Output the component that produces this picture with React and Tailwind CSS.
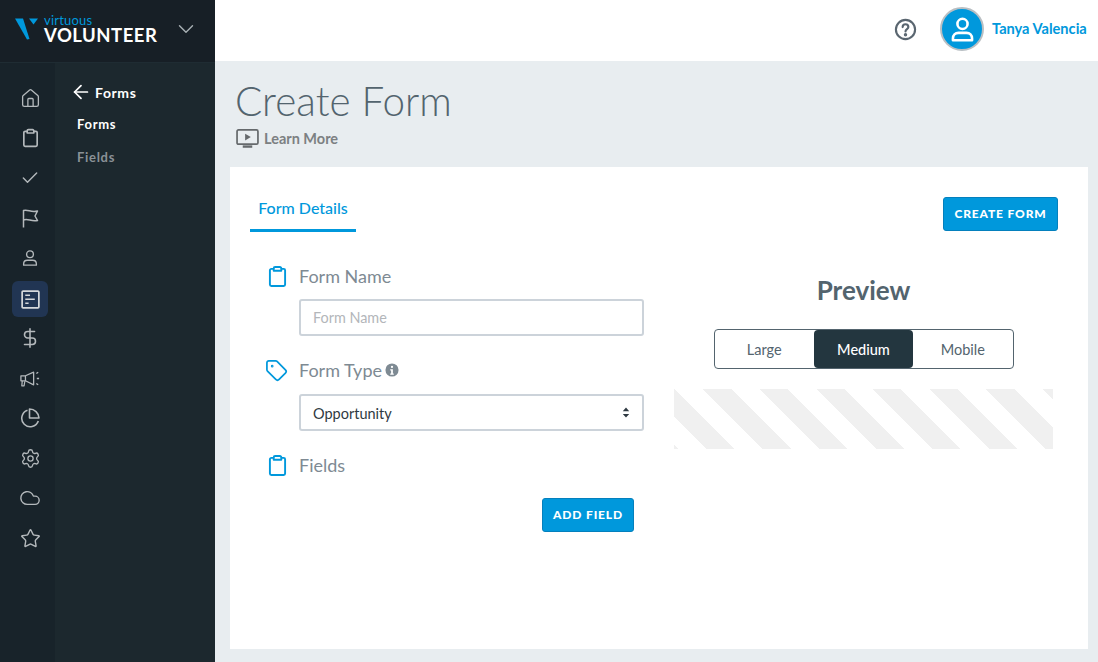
import React from "react";
import { Check, ChevronDown, Cloud, DollarSign, Settings, Star, House, ArrowLeft, Tag } from "lucide-react";

const Clip = ({ className }) => (
  <svg viewBox="0 0 20 24" fill="none" stroke="currentColor" strokeWidth="2" strokeLinejoin="round" className={className}>
    <path d="M6 4H3.5A1.5 1.5 0 0 0 2 5.5v15A1.5 1.5 0 0 0 3.5 22h13a1.5 1.5 0 0 0 1.500-1.500v-15A1.500 1.500 0 0 0 16.500 4H14" />
    <path d="M6 6V3.500A1.500 1.500 0 0 1 7.500 2h5A1.500 1.500 0 0 1 14 3.500V6Z" />
  </svg>
);
const Person = ({ className, sw = 2 }) => (
  <svg viewBox="0 0 24 24" fill="none" stroke="currentColor" strokeWidth={sw} className={className}>
    <circle cx="12" cy="7" r="4.500" />
    <path d="M3.500 21.500v-1.500c0-3 2-5 5-5h7c3 0 5 2 5 5v1.500Z" strokeLinejoin="round" />
  </svg>
);
const FormIcon = ({ className }) => (
  <svg viewBox="0 0 20 20" fill="none" stroke="currentColor" className={className}>
    <rect x="1.200" y="1.200" width="17.600" height="17.600" rx="1" strokeWidth="1.800" />
    <path d="M4.500 5.500h5M4.500 9.800h10M4.500 14h3.500" strokeWidth="1.700" />
  </svg>
);
const FlagIcon = ({ className }) => (
  <svg viewBox="0 0 20 20" fill="none" stroke="currentColor" strokeWidth="1.500" strokeLinejoin="round" className={className}>
    <path d="M3.500 19.500V2.500C8 1 11 5 17.500 3L15 8l2.500 4.500C11 14 8 10 3.500 12" />
  </svg>
);
const Mega = ({ className }) => (
  <svg viewBox="0 0 22 20" fill="none" stroke="currentColor" strokeWidth="1.400" strokeLinejoin="round" className={className}>
    <path d="M1 7h5v5.500H1Z" />
    <path d="M6 7l9-4v14l-9-4.500" />
    <path d="M2.500 12.500 2 18h2.500l.8-5" />
    <path d="M18 4.500 20 3M18.500 10h2.500M18 15.500l2 1.500" />
  </svg>
);
const Pie = ({ className }) => (
  <svg viewBox="0 0 20 20" fill="none" stroke="currentColor" strokeWidth="1.600" strokeLinejoin="round" className={className}>
    <path d="M7.500 2.200A8.500 8.500 0 1 0 18.300 13" />
    <path d="M9.500 1V10h9.500A9.500 9.500 0 0 0 9.500 1Z" />
  </svg>
);

const railIcons = [
  <House className="h-[21px] w-[21px]" strokeWidth={1.500} />,
  <Clip className="h-[20px] w-[17px]" />,
  <Check className="h-[20px] w-[20px]" strokeWidth={1.700} />,
  <FlagIcon className="h-[20px] w-[20px]" />,
  <Person className="h-[18px] w-[18px]" sw={1.800} />,
  <FormIcon className="h-[19px] w-[19px]" />,
  <DollarSign className="h-[22px] w-[22px]" strokeWidth={1.700} />,
  <Mega className="h-[19px] w-[20px]" />,
  <Pie className="h-[20px] w-[20px]" />,
  <Settings className="h-[21px] w-[21px]" strokeWidth={1.500} />,
  <Cloud className="h-[22px] w-[22px]" strokeWidth={1.500} />,
  <Star className="h-[21px] w-[21px]" strokeWidth={1.600} />,
];

const Btn = ({ children, className = "" }) => (
  <button className={"flex h-[34px] items-center justify-center rounded-[3px] border border-[#0480bd] bg-[#0098dc] text-[12px] font-black tracking-[0.85px] text-white " + className}>
    {children}
  </button>
);

const Label = ({ icon, children }) => (
  <div className="flex items-center">
    <div className="flex w-[49px] justify-center pl-[5px] text-[#0098dc]">{icon}</div>
    <span className="text-[18px] leading-[24px] text-[#7e8a93]">{children}</span>
  </div>
);

export default function App() {
  return (
    <div className="flex h-[662px] w-[1098px] overflow-hidden bg-[#e8edf0] font-['Lato',sans-serif]">
      <aside className="flex w-[215px] flex-col bg-[#1c282e]">
        <div className="flex h-[63px] items-center border-b border-[#1f2c33] bg-[#171f26] pb-[5px] pl-[15px] pr-[16px]">
          <svg viewBox="0 0 24 22" className="h-[24px] w-[24px]">
            <path d="M0 0.500h8L14.500 21 12 21.500Z" fill="#0098dc" />
            <path d="M14 0.500h9l-4.500 6Z" fill="#0098dc" />
          </svg>
          <div className="ml-[5px] flex flex-col">
            <span className="text-[13px] leading-[12px] tracking-[0.2px] text-[#0098dc]">virtuous</span>
            <span className="text-[18.500px] font-bold leading-[18px] tracking-[0.5px] text-white">VOLUNTEER</span>
          </div>
          <ChevronDown className="ml-auto h-[26px] w-[26px] text-[#a8b0b4]" strokeWidth={1.300} />
        </div>
        <div className="flex flex-1">
          <nav className="flex w-[55px] flex-col items-center bg-[#18232a] pt-[15px]">
            {railIcons.map((icon, i) => (
              <div key={i} className="flex h-10 w-full items-center justify-center pl-[5px] text-[#b4b9bc]">
                <div className={"flex h-9 w-9 items-center justify-center rounded-md " + (i === 5 ? "translate-y-[1px] bg-[#213553] text-[#d5d8db]" : "")}>{icon}</div>
              </div>
            ))}
          </nav>
          <div className="flex flex-1 flex-col pl-[20px] pt-[17px]">
            <div className="flex h-6 items-center text-[14px] font-bold tracking-[0.6px] text-white">
              <ArrowLeft className="-ml-[5px] mr-[3px] h-[22px] w-[22px]" strokeWidth={1.900} />
              Forms
            </div>
            <div className="mt-[8px] pl-[2px] text-[13px] font-bold leading-[24px] tracking-[0.7px] text-white">Forms</div>
            <div className="mt-[9px] pl-[2px] text-[13px] font-bold leading-[24px] tracking-[0.7px] text-[#8a9196]">Fields</div>
          </div>
        </div>
      </aside>

      <main className="flex flex-1 flex-col">
        <header className="flex h-[61px] items-center bg-white pb-[3px] pl-[679px]">
          <svg viewBox="0 0 24 24" fill="none" stroke="#5a6670" strokeWidth="2.200" className="h-[23px] w-[23px]">
            <circle cx="12" cy="12" r="10" />
            <path d="M9 9.500a3 3 0 0 1 6 0c0 2-3 2.300-3 4.500" strokeLinecap="round" />
            <circle cx="12" cy="17.500" r="0.700" fill="#5a6670" />
          </svg>
          <div className="ml-[23px] flex h-[44px] w-[44px] items-center justify-center rounded-full border-2 border-[#b9bfc3] bg-[#0098dc] text-white">
            <Person className="h-[27px] w-[27px]" sw={2.300} />
          </div>
          <span className="ml-[8px] text-[14.600px] font-bold text-[#0098dc]">Tanya Valencia</span>
        </header>

        <div className="flex h-[106px] flex-col pl-[20px] pt-[15px]">
          <h1 className="text-[40.400px] font-light leading-[50px] text-[#53646e]">Create Form</h1>
          <div className="mt-[2px] flex items-center pl-[1px] text-[14.500px] font-bold text-[#7c8082]">
            <svg viewBox="0 0 24 20" fill="none" className="mr-[5px] h-[19px] w-[23px]">
              <rect x="1" y="1" width="22" height="15" rx="1.500" stroke="#65696c" strokeWidth="1.800" />
              <path d="M9.500 5v7l6-3.500Z" fill="#65696c" />
              <path d="M7 18.500h10" stroke="#65696c" strokeWidth="2.500" />
            </svg>
            Learn More
          </div>
        </div>

        <section className="ml-[15px] mr-[10px] flex h-[482px] flex-col bg-white">
          <div className="flex items-start justify-between pl-[20px] pr-[30px] pt-[23px]">
            <div className="flex h-[42px] w-[106px] items-start justify-center border-b-[3px] border-[#0098dc] text-[16px] font-medium leading-[36px] text-[#0098dc]">
              Form Details
            </div>
            <Btn className="mt-[7px] w-[115px]">CREATE FORM</Btn>
          </div>

          <div className="flex">
            <div className="flex w-[444px] flex-col pl-[20px] pt-[32px]">
              <Label icon={<Clip className="h-[23px] w-[19px]" />}>Form Name</Label>
              <div className="ml-[49px] mt-[11px] flex h-[37px] w-[345px] items-center rounded-[3px] border-2 border-[#ccd3da] pl-[12px] text-[14.400px] text-[#b3b6ba]">
                Form Name
              </div>
              <div className="mt-[22px]">
                <Label icon={<Tag className="-ml-[2px] h-[23px] w-[23px]" strokeWidth={1.800} />}>
                  <span className="flex items-center">
                    Form Type
                    <svg viewBox="0 0 16 16" className="ml-[3px] h-[14px] w-[14px]">
                      <circle cx="8" cy="8" r="7.500" fill="#7e8a93" />
                      <circle cx="8" cy="4.500" r="1.300" fill="#fff" />
                      <path d="M6 7h3v5h1v1.500H6V12h1V8.500H6Z" fill="#fff" />
                    </svg>
                  </span>
                </Label>
              </div>
              <div className="ml-[49px] mt-[12px] flex h-[37px] w-[345px] items-center justify-between rounded-[3px] border-2 border-[#ccd3da] px-[12px] text-[14.500px] text-[#2f3a42]">
                <span className="pt-[2px]">Opportunity</span>
                <svg viewBox="0 0 8 12" className="h-[11px] w-[8px]" fill="#2f3a42">
                  <path d="M4 0.500 7.500 4.500h-7ZM4 11.500.5 7.500h7Z" />
                </svg>
              </div>
              <div className="mt-[22px]">
                <Label icon={<Clip className="h-[23px] w-[19px]" />}>Fields</Label>
              </div>
              <Btn className="ml-[292px] mt-[21px] w-[92px]">ADD FIELD</Btn>
            </div>

            <div className="flex flex-1 flex-col pr-[35px] pt-[42px]">
              <h2 className="text-center text-[26px] font-bold leading-[32px] text-[#53646e]">Preview</h2>
              <div className="mx-auto mt-[23px] flex h-10 w-[300px] rounded-[4px] border border-[#53646e] text-[14.500px] text-[#53646e]">
                <div className="flex flex-1 items-center justify-center pt-[2px]">Large</div>
                <div className="flex flex-1 items-center justify-center rounded-[4px] bg-[#23363f] pt-[2px] font-medium text-white">Medium</div>
                <div className="flex flex-1 items-center justify-center pt-[2px]">Mobile</div>
              </div>
              <div className="mt-5 h-[60px] w-[379px] bg-[repeating-linear-gradient(45deg,#f0f0f0_0,#f0f0f0_2.900px,#ffffff_2.900px,#ffffff_22.900px,#f0f0f0_22.900px,#f0f0f0_40px)]" />
            </div>
          </div>
        </section>
      </main>
    </div>
  );
}
